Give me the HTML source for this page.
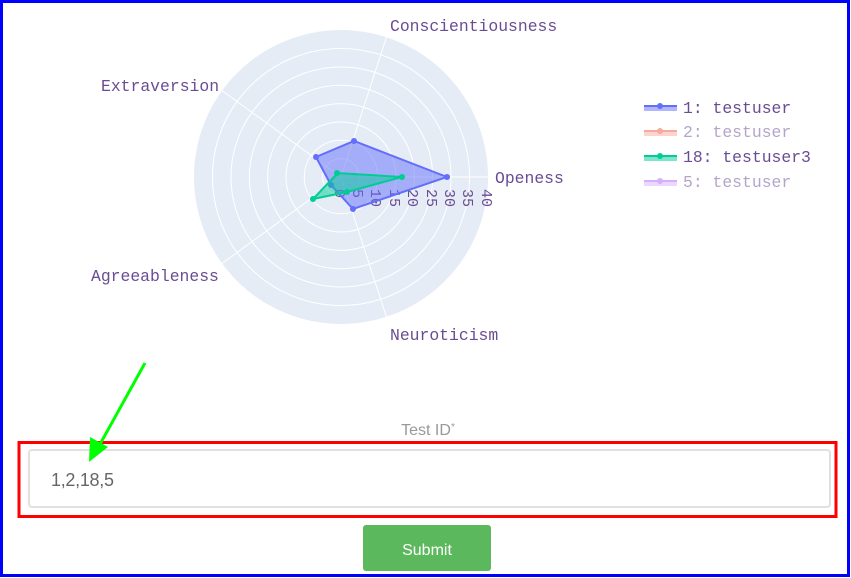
<!DOCTYPE html>
<html><head><meta charset="utf-8"><style>
html,body{margin:0;padding:0;width:851px;height:578px;overflow:hidden;background:#fff}
svg{position:absolute;left:0;top:0}
</style></head><body>
<svg width="851" height="578" xmlns="http://www.w3.org/2000/svg" font-family="Liberation Mono, monospace">
<rect x="1.5" y="1.5" width="847" height="574" fill="none" stroke="#0000ff" stroke-width="3"/>
<circle cx="341" cy="177" r="147" fill="#e5ecf6"/>
<g fill="none" stroke="#fff" stroke-width="1">
<circle cx="341" cy="177" r="18.4"/><circle cx="341" cy="177" r="36.7"/><circle cx="341" cy="177" r="55"/>
<circle cx="341" cy="177" r="73.4"/><circle cx="341" cy="177" r="91.7"/><circle cx="341" cy="177" r="110"/>
<circle cx="341" cy="177" r="128.5"/>
<line x1="341" y1="177" x2="488" y2="177"/>
<line x1="341" y1="177" x2="386.4" y2="37.2"/>
<line x1="341" y1="177" x2="222" y2="90.6"/>
<line x1="341" y1="177" x2="222" y2="263.4"/>
<line x1="341" y1="177" x2="386.4" y2="316.8"/>
</g>
<g fill="#6a4c93" font-size="16.4">
<text x="390" y="31">Conscientiousness</text>
<text x="101" y="91">Extraversion</text>
<text x="495" y="183">Openess</text>
<text x="91" y="281">Agreeableness</text>
<text x="390" y="340">Neuroticism</text>
</g>
<g fill="#6a4c93" font-size="15">
<text transform="translate(335,189) rotate(90)">0</text>
<text transform="translate(353,189) rotate(90)">5</text>
<text transform="translate(371,189) rotate(90)">10</text>
<text transform="translate(390,189) rotate(90)">15</text>
<text transform="translate(408,189) rotate(90)">20</text>
<text transform="translate(427,189) rotate(90)">25</text>
<text transform="translate(445,189) rotate(90)">30</text>
<text transform="translate(463,189) rotate(90)">35</text>
<text transform="translate(482,189) rotate(90)">40</text>
</g>
<polygon points="447,177 354,141 316,157 331,185 353,209" fill="rgba(99,110,250,0.5)" stroke="#636efa" stroke-width="2"/>
<g fill="#636efa"><circle cx="447" cy="177" r="3"/><circle cx="354" cy="141" r="3"/><circle cx="316" cy="157" r="3"/><circle cx="331" cy="185" r="3"/><circle cx="353" cy="209" r="3"/></g>
<polygon points="402,177 337,173 335,176 313,199 347,192" fill="rgba(0,204,150,0.5)" stroke="#00cc96" stroke-width="2"/>
<g fill="#00cc96"><circle cx="402" cy="177" r="3"/><circle cx="337" cy="173" r="3"/><circle cx="313" cy="199" r="3"/><circle cx="347" cy="192" r="3"/></g>
<g font-size="16.4">
<rect x="644" y="105" width="33" height="6" fill="rgba(99,110,250,0.5)"/><line x1="644" y1="106" x2="677" y2="106" stroke="#636efa" stroke-width="2"/><circle cx="660" cy="106" r="3" fill="#636efa"/>
<text x="683" y="113" fill="#6a4c93">1: testuser</text>
<g opacity="0.5"><rect x="644" y="130" width="33" height="6" fill="rgba(239,85,59,0.5)"/><line x1="644" y1="131" x2="677" y2="131" stroke="#ef553b" stroke-width="2"/><circle cx="660" cy="131" r="3" fill="#ef553b"/>
<text x="683" y="137" fill="#6a4c93">2: testuser</text></g>
<rect x="644" y="155" width="33" height="6" fill="rgba(0,204,150,0.5)"/><line x1="644" y1="156" x2="677" y2="156" stroke="#00cc96" stroke-width="2"/><circle cx="660" cy="156" r="3" fill="#00cc96"/>
<text x="683" y="162" fill="#6a4c93">18: testuser3</text>
<g opacity="0.5"><rect x="644" y="180" width="33" height="6" fill="rgba(171,99,250,0.5)"/><line x1="644" y1="181" x2="677" y2="181" stroke="#ab63fa" stroke-width="2"/><circle cx="660" cy="181" r="3" fill="#ab63fa"/>
<text x="683" y="187" fill="#6a4c93">5: testuser</text></g>
</g>
<text x="428" y="435" font-family="Liberation Sans, sans-serif" font-size="16" fill="#999" text-anchor="middle">Test ID<tspan font-size="10" dy="-5">*</tspan></text>
<rect x="19" y="442.5" width="817" height="74" fill="none" stroke="#ff0000" stroke-width="3"/>
<rect x="29" y="450" width="801" height="57" rx="3" fill="#fff" stroke="#e0e0e0" stroke-width="2"/>
<text x="51" y="486" font-family="Liberation Sans, sans-serif" font-size="18" fill="#666" letter-spacing="-0.3">1,2,18,5</text>
<rect x="363" y="525" width="128" height="46" rx="3" fill="#5cb85c"/>
<text x="427" y="555" font-family="Liberation Sans, sans-serif" font-size="16" fill="#fff" text-anchor="middle">Submit</text>
<line x1="145" y1="363" x2="99" y2="446" stroke="#00ff00" stroke-width="3"/>
<polygon points="89,462 90,437 108,447" fill="#00ff00"/>
</svg>
</body></html>
